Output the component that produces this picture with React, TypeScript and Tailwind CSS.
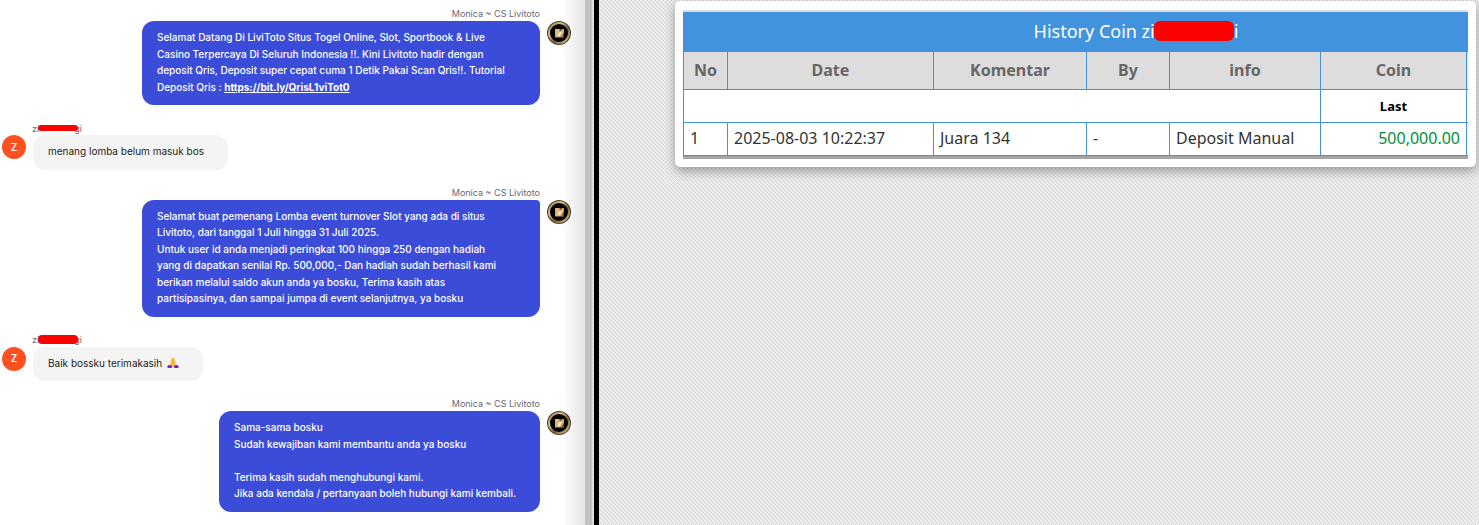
import type { ReactNode } from "react";

function AgentAvatar() {
  return (
    <svg viewBox="0 0 24 24" className="size-6 shrink-0" role="img" aria-label="Livitoto">
      <defs>
        <linearGradient id="ring" x1="0" y1="0" x2="1" y2="1">
          <stop offset="0" stopColor="#8a6a36" />
          <stop offset="0.3" stopColor="#dcc084" />
          <stop offset="0.6" stopColor="#7a5b2c" />
          <stop offset="1" stopColor="#e6c98a" />
        </linearGradient>
      </defs>
      <circle cx="12" cy="12" r="12" fill="#45423c" />
      <circle cx="12" cy="12" r="10" fill="#000" stroke="url(#ring)" strokeWidth="2" />
      <path d="M8 8h9v8.500H8z" fill="#c9985f" />
      <path d="M8 8h4v3l2-.5 3-2.500-1 4-3 4H8.500z" fill="#e0b87c" />
      <path d="M11.500 12l3.500-1.500-2.500 5-1.500-1.500z" fill="#fff3d0" />
      <path d="M12.500 8h3L13.500 10zM16 13l1-1v4.500h-2z" fill="#6b4526" />
    </svg>
  );
}

function FoldedHands() {
  return (
    <svg viewBox="0 0 12 12" className="ml-[2px] inline-block size-3 align-[-2px]" role="img" aria-label="terima kasih">
      <path d="M4.500 1.500Q6-.3 7.500 1.500L8.800 7 9 10H3l.2-3z" fill="#fbbd45" />
      <path d="M6 3V9" stroke="#ef9645" strokeWidth="0.5" />
      <path d="M.5 11V8.800L3 7.800 5.300 9.500 4.500 11z" fill="#7b1fc8" />
      <path d="M11.500 11V8.800L9 7.800 6.700 9.500 7.500 11z" fill="#7b1fc8" />
    </svg>
  );
}

function AgentMessage({ children, tail = false }: { children: ReactNode; tail?: boolean }) {
  return (
    <article className="flex items-end justify-end gap-[7px]">
      <div className="flex flex-col items-end">
        <span className="h-[14px] text-[9px] leading-[13px] text-[#666870]">Monica ~ CS Livitoto</span>
        <div
          className={
            tail
              ? "w-[398px] rounded-xl rounded-tr-sm bg-[#3b4cd9] pt-2 pr-6 pb-[10px] pl-[15px] text-[10px] leading-[1.65] font-medium text-white"
              : "max-w-[398px] rounded-xl bg-[#3b4cd9] pt-2 pr-6 pb-[10px] pl-[15px] text-[10px] leading-[1.65] font-medium text-white"
          }
        >
          {children}
        </div>
      </div>
      <div className="self-start pt-[14px]">
        <AgentAvatar />
      </div>
    </article>
  );
}

function VisitorMessage({ children, thick = false }: { children: ReactNode; thick?: boolean }) {
  return (
    <article className="flex gap-[7px]">
      <div className="pt-[14px]">
        <div className="flex size-6 items-center justify-center rounded-full bg-[#ff5021] text-[10px] font-semibold text-white">
          Z
        </div>
      </div>
      <div className="flex flex-col items-start">
        <span className="-ml-px flex h-[14px] items-center text-[9px] leading-[13px] text-[#666870]">
          zi
          <span
            className={
              thick
                ? "relative -mr-1 -ml-px h-[9px] w-10 rounded-sm bg-[#ff0000]"
                : "relative -mr-1 -ml-px h-[6px] w-10 rounded-sm bg-[#ff0000]"
            }
          />
          gi
        </span>
        <div className="rounded-xl bg-[#f4f4f4] pt-2 pr-6 pb-[10px] pl-[15px] text-[10px] leading-[1.65] text-[#1c1c22]">
          {children}
        </div>
      </div>
    </article>
  );
}

function Chat() {
  return (
    <main className="flex min-w-0 flex-1 flex-col gap-4 bg-white bg-linear-to-l from-[#e4e4e4] to-white to-[22px] pt-[7px] pr-[14px] pb-3 pl-[2px] font-['Inter',sans-serif]">
      <AgentMessage>
        <p className="w-[359px]">
          Selamat Datang Di LiviToto Situs Togel Online, Slot, Sportbook &amp; Live
          <br />
          Casino Terpercaya Di Seluruh Indonesia !!. Kini Livitoto hadir dengan
          <br />
          deposit Qris, Deposit super cepat cuma 1 Detik Pakai Scan Qris!!. Tutorial
          <br />
          Deposit Qris :{" "}
          <a href="https://bit.ly/QrisL1viTot0" className="font-bold underline">
            https://bit.ly/QrisL1viTot0
          </a>
        </p>
      </AgentMessage>
      <VisitorMessage>menang lomba belum masuk bos</VisitorMessage>
      <AgentMessage tail>
        Selamat buat pemenang Lomba event turnover Slot yang ada di situs
        <br />
        Livitoto, dari tanggal 1 Juli hingga 31 Juli 2025.
        <br />
        Untuk user id anda menjadi peringkat 100 hingga 250 dengan hadiah
        <br />
        yang di dapatkan senilai Rp. 500,000,- Dan hadiah sudah berhasil kami
        <br />
        berikan melalui saldo akun anda ya bosku, Terima kasih atas
        <br />
        partisipasinya, dan sampai jumpa di event selanjutnya, ya bosku
      </AgentMessage>
      <VisitorMessage thick>
        Baik bossku terimakasih <FoldedHands />
      </VisitorMessage>
      <AgentMessage>
        <p>Sama-sama bosku</p>
        <p>Sudah kewajiban kami membantu anda ya bosku</p>
        <br />
        <p>Terima kasih sudah menghubungi kami.</p>
        <p>Jika ada kendala / pertanyaan boleh hubungi kami kembali.</p>
      </AgentMessage>
    </main>
  );
}

const headings = ["No", "Date", "Komentar", "By", "info", "Coin", ""];

function History() {
  return (
    <section className="mt-px mr-[3px] ml-[76px] rounded-[5px] bg-white px-2 pt-[9px] pb-2 font-['Noto_Sans',sans-serif] shadow-[0_4px_12px_rgba(0,0,0,0.35)]">
      <div className="overflow-hidden border-t-2 border-b-3 border-t-[#dddddd] border-b-[#a3a5a7]">
        <table className="w-[906px] table-fixed border-collapse text-base text-[#333333]">
          <colgroup>
            <col className="w-[44px]" />
            <col className="w-[206px]" />
            <col className="w-[153px]" />
            <col className="w-[83px]" />
            <col className="w-[151px]" />
            <col className="w-[146px]" />
            <col />
          </colgroup>
          <thead>
            <tr>
              <th colSpan={7} className="h-[39px] border border-[#4193de] bg-[#4193de] px-0 pt-0 pb-[2px] text-lg leading-6 font-normal text-white">
                <span className="inline-flex items-center">
                  History Coin zi
                  <span className="-ml-px h-5 w-20 rounded-md bg-[#ff0000]" />i
                </span>
              </th>
            </tr>
            <tr>
              {headings.map((heading) => (
                <th key={heading} className="h-[38px] border border-[#4193de] bg-[#dddddd] px-0 pt-0 pb-[2px] leading-6 font-bold text-[#666666]">
                  {heading}
                </th>
              ))}
            </tr>
          </thead>
          <tbody>
            <tr>
              <td colSpan={5} className="h-[33px] border border-[#4193de] p-0" />
              <th className="border border-[#4193de] p-0 text-[13px] leading-5 font-bold text-black">Last</th>
              <td className="border border-[#4193de] p-0" />
            </tr>
            <tr>
              <td className="h-[33px] border border-[#4193de] px-[6px] pt-0 pb-[2px] leading-6">1</td>
              <td className="border border-[#4193de] px-[6px] pt-0 pb-[2px] leading-6">2025-08-03 10:22:37</td>
              <td className="border border-[#4193de] px-[6px] pt-0 pb-[2px] leading-6">Juara 134</td>
              <td className="border border-[#4193de] px-[6px] pt-0 pb-[2px] leading-6">-</td>
              <td className="border border-[#4193de] px-[6px] pt-0 pb-[2px] leading-6">Deposit Manual</td>
              <td className="border border-[#4193de] px-[6px] pt-0 pb-[2px] text-right leading-6 text-[#008f39]">500,000.00</td>
              <td className="border border-[#4193de] p-0" />
            </tr>
          </tbody>
        </table>
      </div>
    </section>
  );
}

export default function App() {
  return (
    <div className="flex min-h-screen bg-[#e6e6e6]">
      <div className="flex w-[40.5%] shrink-0">
        <Chat />
        <div className="w-[7px] bg-[#c0c0c0]" />
        <div className="w-[2px] bg-[#e0e0e0]" />
        <div className="w-[5px] bg-black" />
      </div>
      <div className="min-w-0 flex-1 overflow-hidden bg-[#eeeeee] bg-[conic-gradient(from_0deg_at_1px_1px,transparent_75%,#cecece_0),conic-gradient(from_0deg_at_1px_1px,transparent_75%,#d6d6d6_0),conic-gradient(from_0deg_at_1px_1px,transparent_75%,#e0e0e0_0)] bg-size-[4px_4px,4px_4px,2px_2px] bg-position-[0_0,2px_2px,1px_1px]">
        <History />
      </div>
    </div>
  );
}
